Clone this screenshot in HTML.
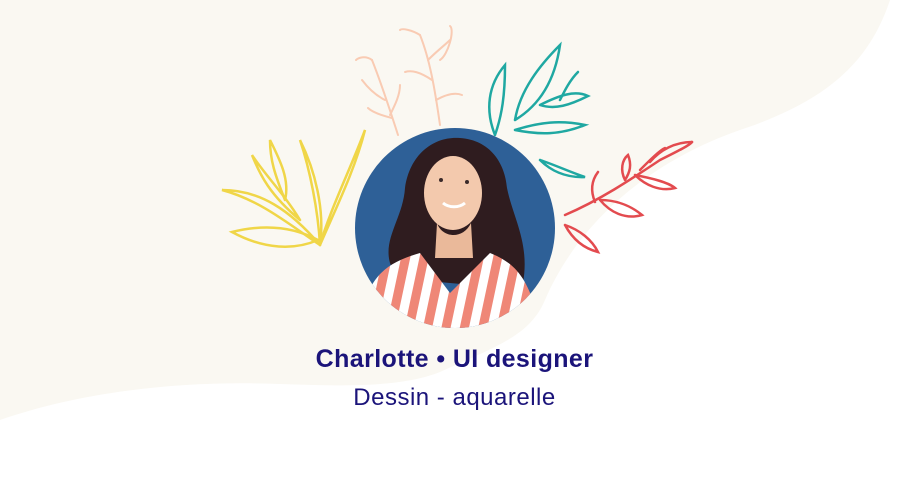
<!DOCTYPE html>
<html><head><meta charset="utf-8"><style>
html,body{margin:0;padding:0;width:909px;height:500px;overflow:hidden;background:#fff;font-family:"Liberation Sans",sans-serif}
.t1{position:absolute;left:0;width:909px;top:345px;text-align:center;font-weight:bold;font-size:25px;color:#1b147a;letter-spacing:0.4px}
.t2{position:absolute;left:0;width:909px;top:384px;text-align:center;font-size:24px;color:#1b147a;letter-spacing:0.5px}
</style></head><body>
<svg width="909" height="500" style="position:absolute;left:0;top:0">
<defs><clipPath id="c"><ellipse cx="100" cy="100" rx="100" ry="100"/></clipPath>
<pattern id="st" width="18" height="18" patternUnits="userSpaceOnUse" patternTransform="rotate(12)"><rect width="18" height="18" fill="#fff"/><rect width="9" height="18" fill="#ef8777"/></pattern></defs>
<path d="M0,0 H890 C870,60 830,100 740,130 C640,165 575,230 545,300 C530,335 500,345 440,372 C400,388 340,386 280,384 C180,380 80,392 0,420 Z" fill="#faf8f2"/>
<g fill="none" stroke-width="2.5" stroke-linecap="round">
<g stroke="#f0d648">
<path d="M320,245 C290,210 260,190 222,190 C260,200 290,225 320,245"/>
<path d="M300,220 C270,195 260,175 252,155 C265,175 285,195 300,220"/>
<path d="M285,200 C275,175 270,160 270,140 C280,160 290,180 285,200"/>
<path d="M320,245 C318,210 310,170 300,140 C315,170 325,210 320,245"/>
<path d="M320,245 C335,210 355,170 365,130 C350,170 330,210 320,245"/>
<path d="M318,240 C290,225 260,225 232,232 C265,250 295,250 318,240"/>
</g>
<g stroke="#f9cbb3" stroke-width="2">
<path d="M398,135 C390,110 380,80 372,60"/><path d="M372,60 C365,55 358,58 356,60"/><path d="M385,100 C375,95 368,88 362,80"/><path d="M392,118 C380,115 372,112 368,108"/><path d="M390,115 C395,105 400,95 400,85"/>
<path d="M440,125 C435,90 430,60 420,35"/><path d="M420,35 C412,30 402,28 400,30"/><path d="M428,60 C438,50 445,45 450,40"/><path d="M432,80 C420,72 412,70 405,72"/><path d="M436,100 C445,95 455,92 462,95"/><path d="M440,60 C448,55 455,30 450,26"/>
</g>
<g stroke="#1fa8a2">
<path d="M495,135 C485,110 488,85 505,65 C505,95 502,115 495,135"/>
<path d="M515,120 C520,90 540,65 560,45 C555,80 540,105 515,120"/>
<path d="M540,105 C560,95 575,90 588,96 C570,105 555,110 540,105"/>
<path d="M515,130 C540,122 560,120 585,125 C560,135 540,135 515,130"/>
<path d="M540,160 C555,165 570,172 585,177 C565,178 550,170 540,160"/>
<path d="M560,100 C565,90 570,80 578,72"/>
</g>
<g stroke="#e34b4f">
<path d="M565,215 C600,200 630,180 660,160 C680,150 690,145 692,142"/>
<path d="M692,142 C675,142 660,150 650,162"/>
<path d="M640,170 C650,160 660,150 665,148"/>
<path d="M635,175 C650,178 668,182 675,188 C660,192 645,185 635,175"/>
<path d="M625,180 C620,170 622,160 628,155 C632,165 630,172 625,180"/>
<path d="M600,200 C615,200 630,205 642,215 C625,220 610,212 600,200"/>
<path d="M595,202 C590,190 592,180 598,172"/>
<path d="M565,225 C580,230 592,240 598,252 C582,248 572,238 565,225"/>
</g>
</g>
<g transform="translate(355,128)" clip-path="url(#c)">
<rect width="200" height="200" fill="#2e6097"/>
<path d="M35,135 C28,110 48,90 50,60 C55,25 80,8 105,10 C135,12 150,35 152,60 C158,90 175,115 168,155 L150,160 L40,150 Z" fill="#2f1c1f"/>
<ellipse cx="98" cy="65" rx="29" ry="37" fill="#f3c9ad"/>
<path d="M82,95 C87,110 108,112 116,95 L118,130 L80,130 Z" fill="#eab99a"/>
<path d="M5,200 C10,150 30,135 65,125 L95,165 L135,125 C160,135 175,150 185,200 Z" fill="url(#st)"/>
<path d="M88,75 C94,80 104,80 110,75" stroke="#fff" stroke-width="3" fill="none"/>
<circle cx="86" cy="52" r="2" fill="#3a2a2a"/><circle cx="112" cy="54" r="2" fill="#3a2a2a"/>
</g>
</svg>
<div class="t1">Charlotte • UI designer</div>
<div class="t2">Dessin - aquarelle</div>
</body></html>
